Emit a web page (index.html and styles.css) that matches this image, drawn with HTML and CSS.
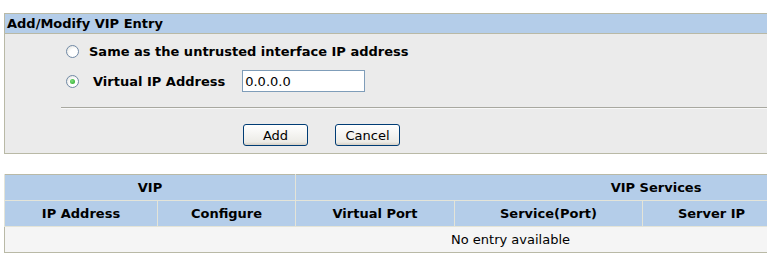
FILE: index.html
```html
<!DOCTYPE html>
<html>
<head>
    <title>Add/Modify VIP Entry</title>
    <link rel="stylesheet" href="styles.css">
</head>
<body>
    <div class="page">
        <div class="panel">
            <div class="panel-head">Add/Modify VIP Entry</div>
            <div class="panel-body">
                <div class="opt">
                    <span class="radio"></span>
                    <span class="opt-label">Same as the untrusted interface IP address</span>
                </div>
                <div class="opt">
                    <span class="radio checked"></span>
                    <span class="opt-label second">Virtual IP Address</span>
                    <input type="text" class="ip-input" value="0.0.0.0">
                </div>
                <div class="divider"></div>
                <div class="actions">
                    <button class="btn">Add</button>
                    <button class="btn">Cancel</button>
                </div>
            </div>
        </div>

        <table class="vip-table">
            <colgroup>
                <col class="c-ip">
                <col class="c-conf">
                <col class="c-port">
                <col class="c-svc">
                <col class="c-srv">
                <col class="c-rest">
            </colgroup>
            <tr>
                <th colspan="2">VIP</th>
                <th colspan="4">VIP Services</th>
            </tr>
            <tr>
                <th>IP Address</th>
                <th>Configure</th>
                <th>Virtual Port</th>
                <th>Service(Port)</th>
                <th>Server IP</th>
                <th></th>
            </tr>
            <tr>
                <td colspan="6">No entry available</td>
            </tr>
        </table>
    </div>
</body>
</html>
```

FILE: styles.css
```css
html, body {
    margin: 0;
    padding: 0;
    background: #ffffff;
    overflow: hidden;
}

body {
    font-family: "DejaVu Sans", Verdana, sans-serif;
    font-size: 13px;
    color: #000;
}

.page {
    width: 1012px;
    padding: 13px 0 0 4px;
}

.panel {
    border: 1px solid #b9b9a6;
    background: #ebebeb;
}

.panel-head {
    background: #b4cde9;
    height: 19px;
    line-height: 19px;
    padding-left: 2px;
    font-weight: bold;
    border-bottom: 1px solid #b9b9a6;
}

.panel-body {
    padding: 6px 0 7px 0;
}

.opt {
    display: flex;
    align-items: center;
    height: 22px;
    padding-left: 61px;
    margin-bottom: 8px;
}

.radio {
    width: 11px;
    height: 11px;
    border: 1px solid #7089a6;
    border-radius: 50%;
    background: radial-gradient(circle at 65% 65%, #ffffff 40%, #dcdcd6 100%);
    position: relative;
}

.radio.checked::after {
    content: "";
    position: absolute;
    left: 3px;
    top: 3px;
    width: 5px;
    height: 5px;
    border-radius: 50%;
    background: radial-gradient(circle at 40% 40%, #7ee07e, #21a121);
}

.opt-label {
    font-weight: bold;
    margin-left: 10px;
}

.opt-label.second {
    margin-left: 14px;
}

.ip-input {
    box-sizing: border-box;
    margin-left: 17px;
    width: 123px;
    height: 22px;
    padding: 0 2px;
    border: 1px solid #7f9db9;
    font-family: "DejaVu Sans", Verdana, sans-serif;
    font-size: 13px;
}

.divider {
    margin: 15px 0 0 56px;
    border-top: 1px solid #a8a8a0;
    border-bottom: 1px solid #f8f8f8;
}

.actions {
    padding: 15px 0 0 238px;
    display: flex;
    gap: 27px;
}

.btn {
    width: 65px;
    height: 22px;
    border: 1px solid #003c74;
    border-radius: 3px;
    background: linear-gradient(#ffffff, #ecebe6 85%, #d6d0c5);
    font-family: "DejaVu Sans", Verdana, sans-serif;
    font-size: 13px;
    padding: 0;
    color: #000;
}

.vip-table {
    margin-top: 20px;
    width: 1012px;
    table-layout: fixed;
    border-collapse: collapse;
    border: 1px solid #b9b9a6;
}

.vip-table th {
    background: #b4cde9;
    height: 25px;
    font-weight: bold;
    border-left: 1px solid #e4e4d8;
    border-bottom: 1px solid #e4e4d8;
    padding: 0;
}

.vip-table td {
    background: #f5f5f5;
    height: 25px;
    text-align: center;
    padding: 0;
}

.c-ip { width: 153px; }
.c-conf { width: 138px; }
.c-port { width: 159px; }
.c-svc { width: 188px; }
.c-srv { width: 138px; }
.c-rest { width: 236px; }
```
